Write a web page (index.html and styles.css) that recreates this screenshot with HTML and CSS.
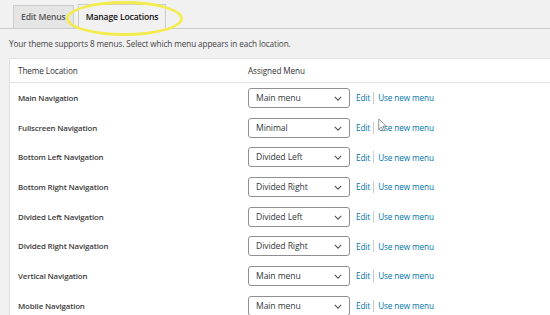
FILE: index.html
```html
<!DOCTYPE html>
<html>
<head>
<meta charset="utf-8">
<link rel="stylesheet" href="styles.css">
</head>
<body>
<div class="page">
  <div class="tabs">
    <span class="tab">Edit Menus</span>
    <span class="tab active">Manage Locations</span>
  </div>
  <p class="intro">Your theme supports 8 menus. Select which menu appears in each location.</p>
  <table class="locations">
    <thead>
      <tr><th class="col-loc">Theme Location</th><th>Assigned Menu</th></tr>
    </thead>
    <tbody>
      <tr><td class="loc">Main Navigation</td><td><div class="assign"><span class="select">Main menu<svg class="chev" viewBox="0 0 10 6"><path d="M1 1l4 4 4-4"/></svg></span><a class="link">Edit</a><span class="sep"></span><a class="link">Use new menu</a></div></td></tr>
      <tr><td class="loc">Fullscreen Navigation</td><td><div class="assign"><span class="select">Minimal<svg class="chev" viewBox="0 0 10 6"><path d="M1 1l4 4 4-4"/></svg></span><a class="link">Edit</a><span class="sep"></span><a class="link">Use new menu</a></div></td></tr>
      <tr><td class="loc">Bottom Left Navigation</td><td><div class="assign"><span class="select">Divided Left<svg class="chev" viewBox="0 0 10 6"><path d="M1 1l4 4 4-4"/></svg></span><a class="link">Edit</a><span class="sep"></span><a class="link">Use new menu</a></div></td></tr>
      <tr><td class="loc">Bottom Right Navigation</td><td><div class="assign"><span class="select">Divided Right<svg class="chev" viewBox="0 0 10 6"><path d="M1 1l4 4 4-4"/></svg></span><a class="link">Edit</a><span class="sep"></span><a class="link">Use new menu</a></div></td></tr>
      <tr><td class="loc">Divided Left Navigation</td><td><div class="assign"><span class="select">Divided Left<svg class="chev" viewBox="0 0 10 6"><path d="M1 1l4 4 4-4"/></svg></span><a class="link">Edit</a><span class="sep"></span><a class="link">Use new menu</a></div></td></tr>
      <tr><td class="loc">Divided Right Navigation</td><td><div class="assign"><span class="select">Divided Right<svg class="chev" viewBox="0 0 10 6"><path d="M1 1l4 4 4-4"/></svg></span><a class="link">Edit</a><span class="sep"></span><a class="link">Use new menu</a></div></td></tr>
      <tr><td class="loc">Vertical Navigation</td><td><div class="assign"><span class="select">Main menu<svg class="chev" viewBox="0 0 10 6"><path d="M1 1l4 4 4-4"/></svg></span><a class="link">Edit</a><span class="sep"></span><a class="link">Use new menu</a></div></td></tr>
      <tr><td class="loc">Mobile Navigation</td><td><div class="assign"><span class="select">Main menu<svg class="chev" viewBox="0 0 10 6"><path d="M1 1l4 4 4-4"/></svg></span><a class="link">Edit</a><span class="sep"></span><a class="link">Use new menu</a></div></td></tr>
    </tbody>
  </table>
  <div class="highlight"></div>
  <svg class="cursor" viewBox="0 0 12 18"><path d="M1 1v14l3.5-3.5 2.5 5.5 2-1-2.5-5.3h5z"/></svg>
</div>
</body>
</html>
```
FILE: styles.css
```css
html, body {
  margin: 0;
  padding: 0;
  background: #f1f1f1;
}
body {
  width: 550px;
  height: 315px;
  overflow: hidden;
  font-family: "Open Sans", "Noto Sans", sans-serif;
  color: #444;
}
.page {
  position: relative;
  height: 315px;
}
.tabs {
  display: flex;
  align-items: flex-end;
  gap: 4px;
  padding-left: 13px;
  height: 28px;
  border-bottom: 1px solid #ccc;
}
.tab {
  display: flex;
  align-items: center;
  height: 22px;
  padding: 0 7px;
  font-size: 8.6px;
  font-weight: 600;
  letter-spacing: -0.15px;
  color: #555;
  background: #e5e5e5;
  border: 1px solid #ccc;
  border-bottom: none;
}
.tab.active {
  height: 23px;
  color: #111;
  background: #f1f1f1;
  margin-bottom: -1px;
  padding: 0 7px 1px 7px;
}
.intro {
  margin: 0;
  padding: 8px 0 0 9px;
  font-size: 8.2px;
  letter-spacing: -0.1px;
  line-height: 13px;
  color: #444;
}
.locations {
  margin: 8px 0 0 9px;
  width: 560px;
  border-collapse: collapse;
  background: #fff;
  border: 1px solid #e1e1e1;
  font-size: 8.2px;
  letter-spacing: -0.1px;
}
.locations th {
  text-align: left;
  font-weight: 400;
  color: #333;
  height: 23px;
  padding: 0 8px;
  border-bottom: 1px solid #e1e1e1;
}
.locations th.col-loc {
  width: 214px;
}
.locations td {
  height: 29.7px;
  padding: 0 8px;
}
.loc {
  font-weight: 600;
  font-size: 7.9px;
  letter-spacing: -0.15px;
  color: #3c3c3c;
}
.assign {
  display: flex;
  align-items: center;
}
.select {
  position: relative;
  display: flex;
  align-items: center;
  box-sizing: border-box;
  width: 102px;
  height: 20px;
  padding-left: 7px;
  border: 1px solid #8c8f94;
  border-radius: 3px;
  background: #fff;
  color: #32373c;
  font-size: 8.6px;
}
.chev {
  position: absolute;
  right: 7px;
  top: 7px;
  width: 8px;
  height: 5px;
  fill: none;
  stroke: #555;
  stroke-width: 1.4;
}
.link {
  color: #0073aa;
  font-size: 8.2px;
  margin-left: 6px;
}
.sep {
  width: 1px;
  height: 12px;
  background: #ccc;
  margin-left: 3px;
  margin-right: -2px;
}
.highlight {
  position: absolute;
  left: 66px;
  top: 1px;
  width: 111px;
  height: 29px;
  border: 3px solid #f4ec4e;
  border-radius: 50%;
}
.cursor {
  position: absolute;
  left: 378px;
  top: 118px;
  width: 9px;
  height: 14px;
  fill: #fff;
  stroke: #777;
  stroke-width: 1;
}
```
